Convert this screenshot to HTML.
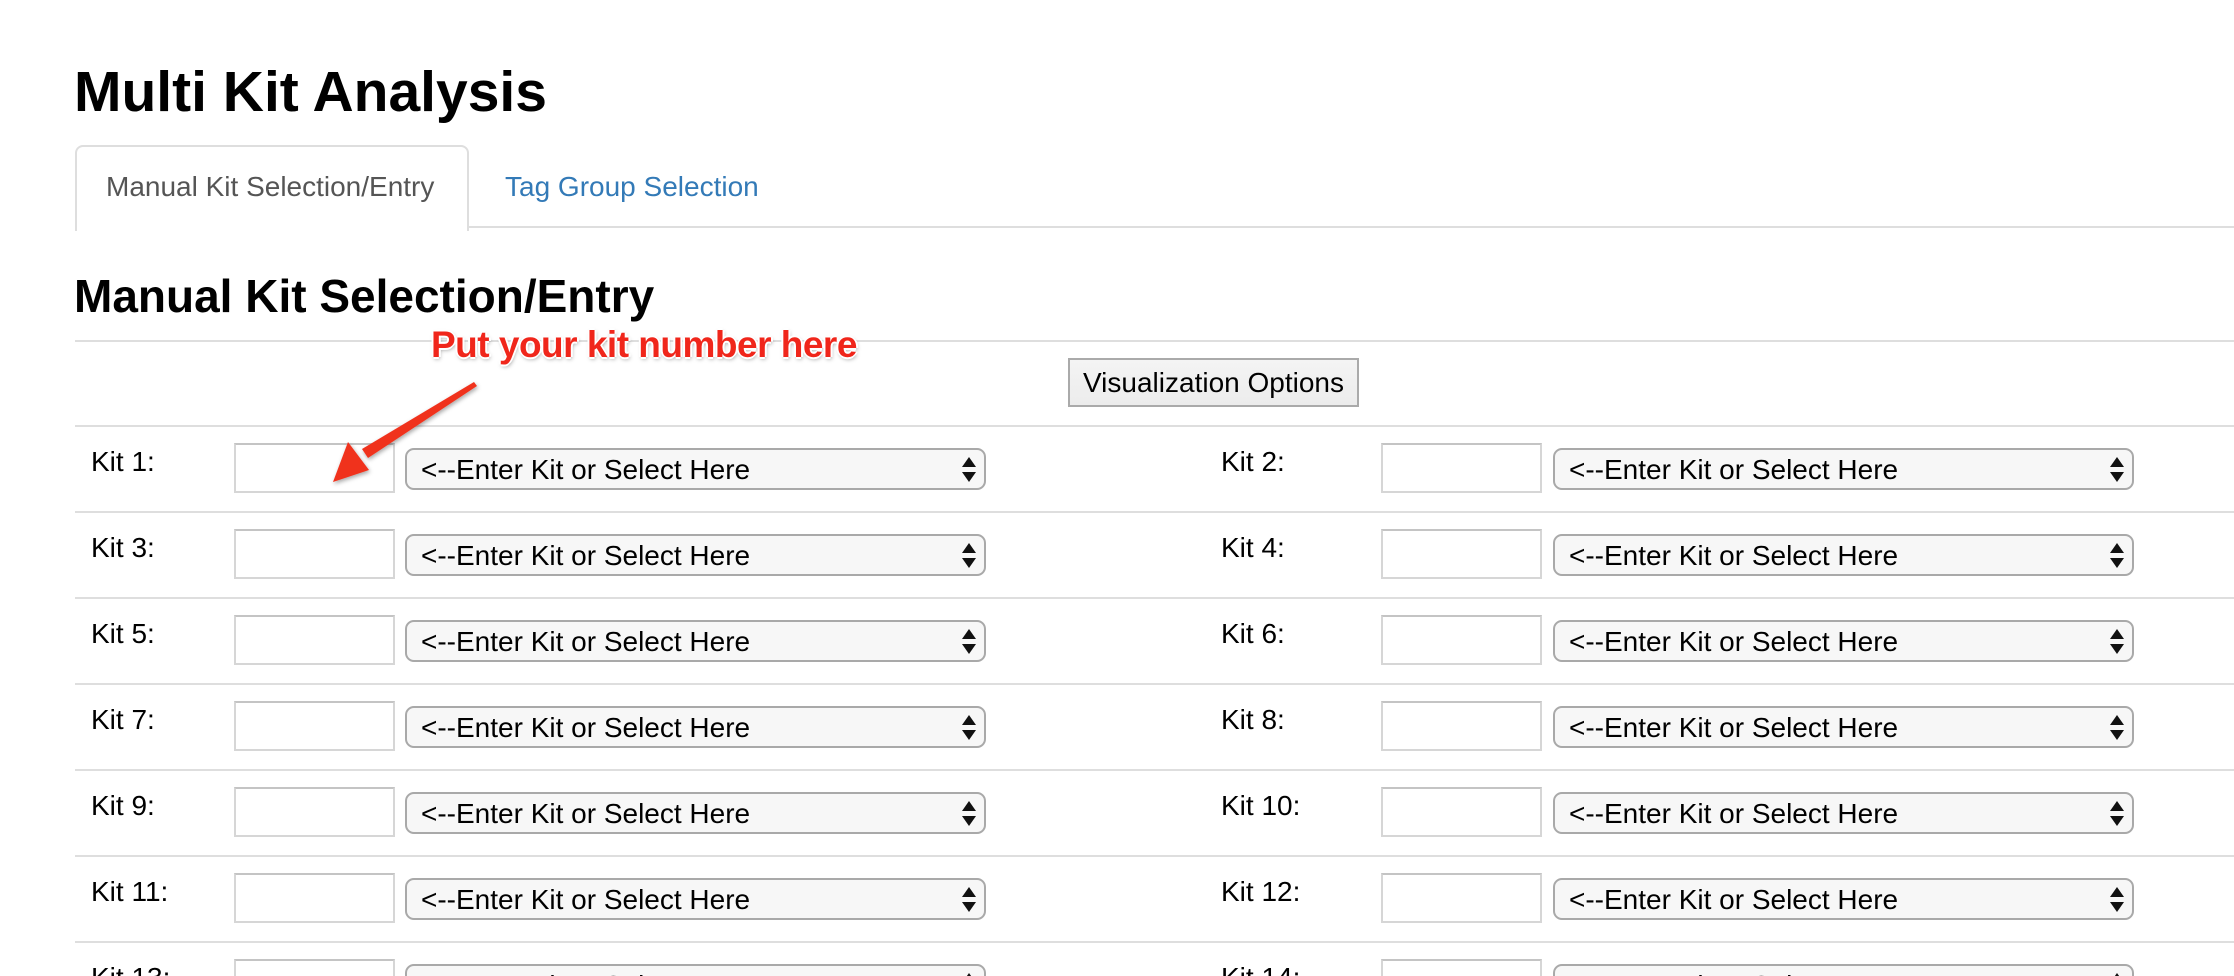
<!DOCTYPE html>
<html><head><meta charset="utf-8"><style>
html,body{margin:0;padding:0;background:#fff;width:2234px;height:976px;overflow:hidden;position:relative;font-family:"Liberation Sans",Arial,sans-serif;color:#000}
.a{position:absolute;white-space:nowrap}
.hl{position:absolute;left:75px;right:0;height:2px;background:#dedede}
.row{position:absolute;left:0;right:0;height:86px;overflow:hidden}
.lab{position:absolute;font-size:28px;line-height:32px;top:21px}
.inp{position:absolute;top:18px;width:157px;height:46px;border:2px solid #d6d6d6;border-top-color:#c4c4c4;background:#fff}
.sel{position:absolute;top:23px;width:577px;height:38px;border:2px solid #a9a9a9;border-radius:9px;background:#f7f7f7;font-size:28px;line-height:38px;box-sizing:content-box}
.sel span{position:absolute;left:14px;top:1px}
.sel i{position:absolute;right:8px;top:7px;width:0;height:0;border-left:7px solid transparent;border-right:7px solid transparent;border-bottom:10px solid #111}
.sel b{position:absolute;right:8px;top:22px;width:0;height:0;border-left:7px solid transparent;border-right:7px solid transparent;border-top:10px solid #111}
</style></head><body>
<div class="a" style="left:74px;top:60px;font-size:57px;line-height:64px;font-weight:bold">Multi Kit Analysis</div>
<div class="a" style="left:75px;top:145px;width:390px;height:84px;border:2px solid #dedede;border-bottom:none;border-radius:8px 8px 0 0;background:#fff"></div>
<div class="a" style="left:469px;right:0;top:226px;height:2px;background:#dedede"></div>
<div class="a" style="left:106px;top:171px;font-size:28px;line-height:32px;color:#555">Manual Kit Selection/Entry</div>
<div class="a" style="left:505px;top:171px;font-size:28px;line-height:32px;color:#337ab7">Tag Group Selection</div>
<div class="a" style="left:74px;top:270px;font-size:46px;line-height:52px;font-weight:bold">Manual Kit Selection/Entry</div>
<div class="hl" style="top:340px"></div>
<div class="a" style="left:1068px;top:358px;width:287px;height:45px;border:2px solid #aaa;background:linear-gradient(#f4f4f4,#ececec);font-size:28px;line-height:45px;text-align:center">Visualization Options</div>
<div class="a" style="left:431px;top:323px;font-size:37px;line-height:44px;font-weight:bold;color:#f0261b;letter-spacing:-0.5px;text-shadow:-2px 0 #fff,2px 0 #fff,0 -2px #fff,0 2px #fff,1px 2px 4px rgba(0,0,0,.4)">Put your kit number here</div>

<div class="row" style="top:425px"><div class="hl" style="top:0px"></div>
<div class="lab" style="left:91px">Kit 1:</div><div class="inp" style="left:234px"></div><div class="sel" style="left:405px"><span>&lt;--Enter Kit or Select Here</span><i></i><b></b></div>
<div class="lab" style="left:1221px">Kit 2:</div><div class="inp" style="left:1381px"></div><div class="sel" style="left:1553px"><span>&lt;--Enter Kit or Select Here</span><i></i><b></b></div></div>
<div class="row" style="top:511px"><div class="hl" style="top:0px"></div>
<div class="lab" style="left:91px">Kit 3:</div><div class="inp" style="left:234px"></div><div class="sel" style="left:405px"><span>&lt;--Enter Kit or Select Here</span><i></i><b></b></div>
<div class="lab" style="left:1221px">Kit 4:</div><div class="inp" style="left:1381px"></div><div class="sel" style="left:1553px"><span>&lt;--Enter Kit or Select Here</span><i></i><b></b></div></div>
<div class="row" style="top:597px"><div class="hl" style="top:0px"></div>
<div class="lab" style="left:91px">Kit 5:</div><div class="inp" style="left:234px"></div><div class="sel" style="left:405px"><span>&lt;--Enter Kit or Select Here</span><i></i><b></b></div>
<div class="lab" style="left:1221px">Kit 6:</div><div class="inp" style="left:1381px"></div><div class="sel" style="left:1553px"><span>&lt;--Enter Kit or Select Here</span><i></i><b></b></div></div>
<div class="row" style="top:683px"><div class="hl" style="top:0px"></div>
<div class="lab" style="left:91px">Kit 7:</div><div class="inp" style="left:234px"></div><div class="sel" style="left:405px"><span>&lt;--Enter Kit or Select Here</span><i></i><b></b></div>
<div class="lab" style="left:1221px">Kit 8:</div><div class="inp" style="left:1381px"></div><div class="sel" style="left:1553px"><span>&lt;--Enter Kit or Select Here</span><i></i><b></b></div></div>
<div class="row" style="top:769px"><div class="hl" style="top:0px"></div>
<div class="lab" style="left:91px">Kit 9:</div><div class="inp" style="left:234px"></div><div class="sel" style="left:405px"><span>&lt;--Enter Kit or Select Here</span><i></i><b></b></div>
<div class="lab" style="left:1221px">Kit 10:</div><div class="inp" style="left:1381px"></div><div class="sel" style="left:1553px"><span>&lt;--Enter Kit or Select Here</span><i></i><b></b></div></div>
<div class="row" style="top:855px"><div class="hl" style="top:0px"></div>
<div class="lab" style="left:91px">Kit 11:</div><div class="inp" style="left:234px"></div><div class="sel" style="left:405px"><span>&lt;--Enter Kit or Select Here</span><i></i><b></b></div>
<div class="lab" style="left:1221px">Kit 12:</div><div class="inp" style="left:1381px"></div><div class="sel" style="left:1553px"><span>&lt;--Enter Kit or Select Here</span><i></i><b></b></div></div>
<div class="row" style="top:941px;height:35px"><div class="hl" style="top:0px"></div>
<div class="lab" style="left:91px">Kit 13:</div><div class="inp" style="left:234px"></div><div class="sel" style="left:405px"><span>&lt;--Enter Kit or Select Here</span><i></i><b></b></div>
<div class="lab" style="left:1221px">Kit 14:</div><div class="inp" style="left:1381px"></div><div class="sel" style="left:1553px"><span>&lt;--Enter Kit or Select Here</span><i></i><b></b></div></div>

<svg class="a" style="left:0;top:0" width="2234" height="976">
<defs><filter id="s"><feDropShadow dx="1" dy="2" stdDeviation="2" flood-opacity="0.35"/></filter></defs>
<g filter="url(#s)">
<polygon points="474,382 477,386 368,458 362,449" fill="#f0301c"/>
<polygon points="333,482 348,442 369,470" fill="#f0301c"/>
</g>
</svg>
</body></html>
